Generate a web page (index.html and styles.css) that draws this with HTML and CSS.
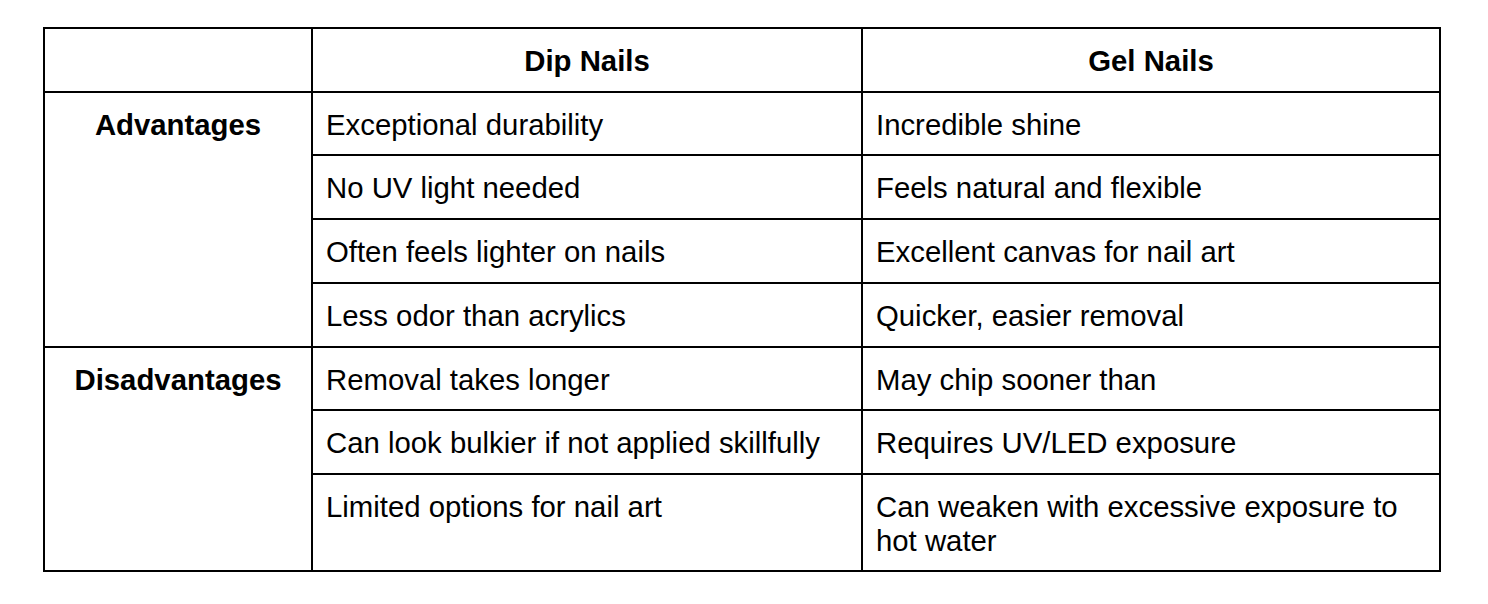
FILE: index.html
```html
<!DOCTYPE html>
<html>
<head>
<meta charset="utf-8">
<link rel="stylesheet" href="styles.css">
</head>
<body>
<div class="page">
<table class="cmp">
<colgroup><col class="c1"><col class="c2"><col class="c3"></colgroup>
<thead>
<tr><th></th><th>Dip Nails</th><th>Gel Nails</th></tr>
</thead>
<tbody>
<tr><th rowspan="4" class="rowhead">Advantages</th><td>Exceptional durability</td><td>Incredible shine</td></tr>
<tr><td>No UV light needed</td><td>Feels natural and flexible</td></tr>
<tr><td>Often feels lighter on nails</td><td>Excellent canvas for nail art</td></tr>
<tr><td>Less odor than acrylics</td><td>Quicker, easier removal</td></tr>
<tr><th rowspan="3" class="rowhead">Disadvantages</th><td>Removal takes longer</td><td>May chip sooner than</td></tr>
<tr><td>Can look bulkier if not applied skillfully</td><td>Requires UV/LED exposure</td></tr>
<tr><td>Limited options for nail art</td><td>Can weaken with excessive exposure to hot water</td></tr>
</tbody>
</table>
</div>
</body>
</html>
```
FILE: styles.css
```css
html, body {
  margin: 0;
  padding: 0;
  background: #ffffff;
}
.page {
  padding: 27px 0 0 43px;
}
.cmp {
  border-collapse: collapse;
  table-layout: fixed;
  width: 1398px;
  font-family: "Liberation Sans", Arial, sans-serif;
  font-size: 29.33px;
  line-height: 33.7px;
  color: #000;
}
.c1 { width: 268px; }
.c2 { width: 550px; }
.c3 { width: 578px; }
.cmp th, .cmp td {
  border: 2px solid #000;
  padding: 15px 13px 13px 13px;
  vertical-align: top;
  text-align: left;
  font-weight: normal;
}
.cmp thead th {
  font-weight: bold;
  text-align: center;
}
.cmp th.rowhead {
  font-weight: bold;
  text-align: center;
}
```
